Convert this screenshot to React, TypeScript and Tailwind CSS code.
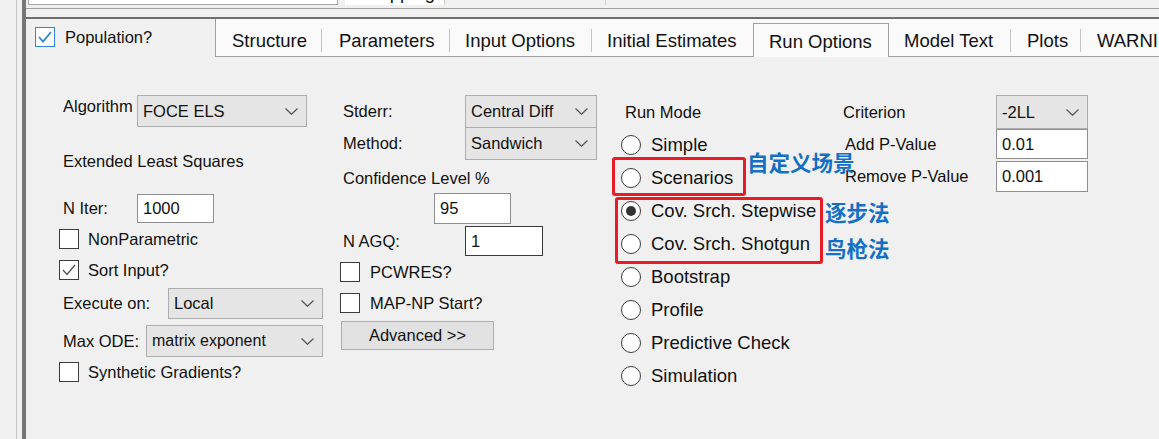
import React from "react";

const Chevron = () => (
  <svg width="13" height="7" viewBox="0 0 13 7" className="shrink-0">
    <polyline points="0.5,0.5 6.5,6.3 12.5,0.5" fill="none" stroke="#555" strokeWidth="1.2" />
  </svg>
);

function Select({ value, w, h }: { value: string; w: string; h: string }) {
  return (
    <div className={`${w} ${h} shrink-0 flex items-center justify-between bg-[#e5e5e5] border border-[#adadad] pl-[5px] pr-[8px] text-[16.5px]`}>
      <span className="whitespace-nowrap">{value}</span>
      <Chevron />
    </div>
  );
}

function TextBox({ value, w, h, dark }: { value: string; w: string; h: string; dark?: boolean }) {
  return (
    <div
      className={`${w} ${h} shrink-0 flex items-center bg-white border pl-[5px] text-[16.5px] ${
        dark ? "border-[#3a3a3a]" : "border-[#8f8f8f]"
      }`}
    >
      {value}
    </div>
  );
}

function CheckBox({ label, checked, blue, gap = "ml-[9px]" }: { label: string; checked?: boolean; blue?: boolean; gap?: string }) {
  return (
    <div className="flex items-center h-[20px]">
      <div
        className={`w-[20px] h-[20px] shrink-0 bg-white border flex items-center justify-center ${
          blue ? "border-[#2f86dd]" : "border-[#3c3c3c]"
        }`}
      >
        {checked && (
          <svg width="16" height="14" viewBox="0 0 16 14">
            <polyline
              points="2,7 6,11.5 14,2"
              fill="none"
              stroke={blue ? "#2f86dd" : "#555"}
              strokeWidth={blue ? 1.8 : 1.4}
            />
          </svg>
        )}
      </div>
      <span className={`${gap} text-[16.5px] leading-[20px] whitespace-nowrap`}>{label}</span>
    </div>
  );
}

function Radio({ label, checked }: { label: string; checked?: boolean }) {
  return (
    <div className="flex items-center h-[33px]">
      <div className="w-[20px] h-[20px] shrink-0 rounded-full bg-white border-[1.5px] border-[#3c3c3c] flex items-center justify-center">
        {checked && <div className="w-[10px] h-[10px] rounded-full bg-[#333]" />}
      </div>
      <span className="ml-[10px] text-[18.5px] whitespace-nowrap">{label}</span>
    </div>
  );
}

const tabs = [
  { label: "Structure", w: "w-[105px]", pl: "pl-[16px]", sep: true },
  { label: "Parameters", w: "w-[127px]", pl: "pl-[17px]", sep: true },
  { label: "Input Options", w: "w-[141px]", pl: "pl-[15px]", sep: true },
  { label: "Initial Estimates", w: "w-[161px]", pl: "pl-[15px]", sep: false },
];

const tabsRight = [
  { label: "Model Text", w: "w-[121px]", pl: "pl-[15px]", sep: true },
  { label: "Plots", w: "w-[69px]", pl: "pl-[16px]", sep: true },
];

const Sep = () => <div className="w-px h-[23px] mt-[10px] bg-[#c6c6c6] shrink-0" />;

export default function App() {
  return (
    <div className="relative w-[1159px] h-[439px] overflow-hidden bg-[#f0f0f0] flex text-[#111] font-['Liberation_Sans',Arial,sans-serif]">
      {/* left frame edges */}
      <div className="w-[16px] shrink-0" />
      <div className="w-px shrink-0 bg-[#c4c4c4]" />
      <div className="w-[5px] shrink-0" />
      <div className="w-[4px] shrink-0 bg-[#777]" />

      <div className="flex-1 flex flex-col min-w-0">
        {/* top strip with the parent tabs */}
        <div className="h-[5px] flex shrink-0">
          <div className="ml-[2px] w-[310px] h-[5px] bg-white border-x border-b border-[#a8a8a8]" />
          <div className="ml-[7px] w-[100px] h-[5px] bg-white overflow-hidden border-r border-[#d0d0d0]">
            <div className="-mt-[17px] pl-[19px] text-[18.5px] leading-[20px]">Mapping</div>
          </div>
          <div className="ml-[160px] w-px h-[5px] bg-[#cfcfcf]" />
        </div>
        <div className="h-[3px] shrink-0" />
        <div className="h-px shrink-0 bg-[#a0a0a0]" />
        <div className="h-[8px] shrink-0" />
        <div className="h-[2px] shrink-0 bg-[#6e6e6e]" />

        {/* tab row */}
        <div className="h-[38px] shrink-0 flex">
          <div className="w-[189px] shrink-0 pl-[9px] pt-[8px]">
            <CheckBox label="Population?" checked blue gap="ml-[10px]" />
          </div>
          <div className="flex-1 flex bg-[#fafafa] border-l border-b border-[#a0a0a0] text-[18.5px] whitespace-nowrap">
            {tabs.map((t) => (
              <React.Fragment key={t.label}>
                <div className={`${t.w} ${t.pl} shrink-0 flex items-center pt-[6px]`}>{t.label}</div>
                {t.sep && <Sep />}
              </React.Fragment>
            ))}
            <div className="w-[136px] h-[34px] shrink-0 self-end -mb-px bg-[#fafafa] border-x border-t border-[#a0a0a0] pl-[15px] pt-[2px] flex items-center">
              Run Options
            </div>
            {tabsRight.map((t) => (
              <React.Fragment key={t.label}>
                <div className={`${t.w} ${t.pl} shrink-0 flex items-center pt-[6px]`}>{t.label}</div>
                {t.sep && <Sep />}
              </React.Fragment>
            ))}
            <div className="flex-1 pl-[16px] flex items-center pt-[6px]">WARNINGS</div>
          </div>
        </div>

        {/* page content */}
        <div className="flex-1 flex text-[16.5px]">
          {/* column 1 */}
          <div className="ml-[33px] w-[281px] shrink-0 flex flex-col pt-[38px]">
            <div className="flex items-start h-[32px]">
              <span className="w-[78px] pl-1 mt-px leading-[20px]">Algorithm</span>
              <Select value="FOCE ELS" w="w-[170px]" h="h-[32px]" />
            </div>
            <div className="mt-[24px] h-[20px] pl-1 leading-[20px]">Extended Least Squares</div>
            <div className="mt-[23px] flex items-center h-[29px]">
              <span className="w-[78px] pl-1">N Iter:</span>
              <TextBox value="1000" w="w-[77px]" h="h-[29px]" />
            </div>
            <div className="mt-[6px]">
              <CheckBox label="NonParametric" />
            </div>
            <div className="mt-[11px]">
              <CheckBox label="Sort Input?" checked />
            </div>
            <div className="mt-[8px] flex items-center h-[31px]">
              <span className="w-[109px] pl-1">Execute on:</span>
              <Select value="Local" w="w-[155px]" h="h-[31px]" />
            </div>
            <div className="mt-[6px] flex items-center h-[32px]">
              <span className="w-[87px] pl-1">Max ODE:</span>
              <div className="w-[177px] h-[32px] shrink-0 flex items-center justify-between bg-[#e5e5e5] border border-[#adadad] pl-[5px] pr-[8px] text-[16px]">
                <span>matrix exponent</span>
                <Chevron />
              </div>
            </div>
            <div className="mt-[5px]">
              <CheckBox label="Synthetic Gradients?" />
            </div>
          </div>

          {/* column 2 */}
          <div className="w-[281px] shrink-0 flex flex-col pt-[38px]">
            <div className="flex items-center h-[33px]">
              <span className="w-[125px] pl-[3px]">Stderr:</span>
              <Select value="Central Diff" w="w-[132px]" h="h-[33px]" />
            </div>
            <div className="-mt-px flex items-center h-[33px]">
              <span className="w-[125px] pl-[3px]">Method:</span>
              <Select value="Sandwich" w="w-[132px]" h="h-[33px]" />
            </div>
            <div className="mt-[8px] h-[20px] pl-[3px] leading-[20px]">Confidence Level %</div>
            <div className="mt-[5px] ml-[94px]">
              <TextBox value="95" w="w-[77px]" h="h-[31px]" />
            </div>
            <div className="mt-[2px] flex items-center h-[30px]">
              <span className="w-[125px] pl-[3px]">N AGQ:</span>
              <TextBox value="1" w="w-[78px]" h="h-[30px]" dark />
            </div>
            <div className="mt-[6px]">
              <CheckBox label="PCWRES?" gap="ml-[10px]" />
            </div>
            <div className="mt-[11px]">
              <CheckBox label="MAP-NP Start?" gap="ml-[10px]" />
            </div>
            <div className="mt-[8px] ml-px w-[153px] h-[29px] flex items-center justify-center bg-[#e1e1e1] border border-[#adadad]">
              Advanced &gt;&gt;
            </div>
          </div>

          {/* column 3 */}
          <div className="w-[222px] shrink-0 flex flex-col pt-[45px]">
            <div className="h-[20px] pl-1 leading-[20px]">Run Mode</div>
            <div className="mt-[6px] flex flex-col">
              <Radio label="Simple" />
              <Radio label="Scenarios" />
              <Radio label="Cov. Srch. Stepwise" checked />
              <Radio label="Cov. Srch. Shotgun" />
              <Radio label="Bootstrap" />
              <Radio label="Profile" />
              <Radio label="Predictive Check" />
              <Radio label="Simulation" />
            </div>
          </div>

          {/* column 4 */}
          <div className="flex-1 flex flex-col pt-[38px]">
            <div className="flex items-center h-[34px]">
              <span className="w-[153px]">Criterion</span>
              <Select value="-2LL" w="w-[92px]" h="h-[34px]" />
            </div>
            <div className="flex items-center h-[30px]">
              <span className="w-[153px] pl-[2px]">Add P-Value</span>
              <TextBox value="0.01" w="w-[92px]" h="h-[30px]" />
            </div>
            <div className="mt-[2px] flex items-center h-[31px]">
              <span className="w-[153px] pl-[2px]">Remove P-Value</span>
              <TextBox value="0.001" w="w-[92px]" h="h-[31px]" />
            </div>
          </div>
        </div>
      </div>

      {/* annotations drawn over the dialog */}
      <div className="absolute left-[612px] top-[157px] w-[134px] h-[39px] border-[3px] border-[#e81c24] rounded-[3px]" />
      <div className="absolute left-[615px] top-[197px] w-[208px] h-[67px] border-[3px] border-[#e81c24] rounded-[3px]" />
      <div className="absolute left-[747px] top-[151px] text-[21.5px] leading-[21.5px] font-bold text-[#1370c6] font-['Noto_Sans_CJK_SC',sans-serif]">
        自定义场景
      </div>
      <div className="absolute left-[825px] top-[201px] text-[21.5px] leading-[21.5px] font-bold text-[#1370c6] font-['Noto_Sans_CJK_SC',sans-serif]">
        逐步法
      </div>
      <div className="absolute left-[825px] top-[237px] text-[21.5px] leading-[21.5px] font-bold text-[#1370c6] font-['Noto_Sans_CJK_SC',sans-serif]">
        鸟枪法
      </div>
    </div>
  );
}
